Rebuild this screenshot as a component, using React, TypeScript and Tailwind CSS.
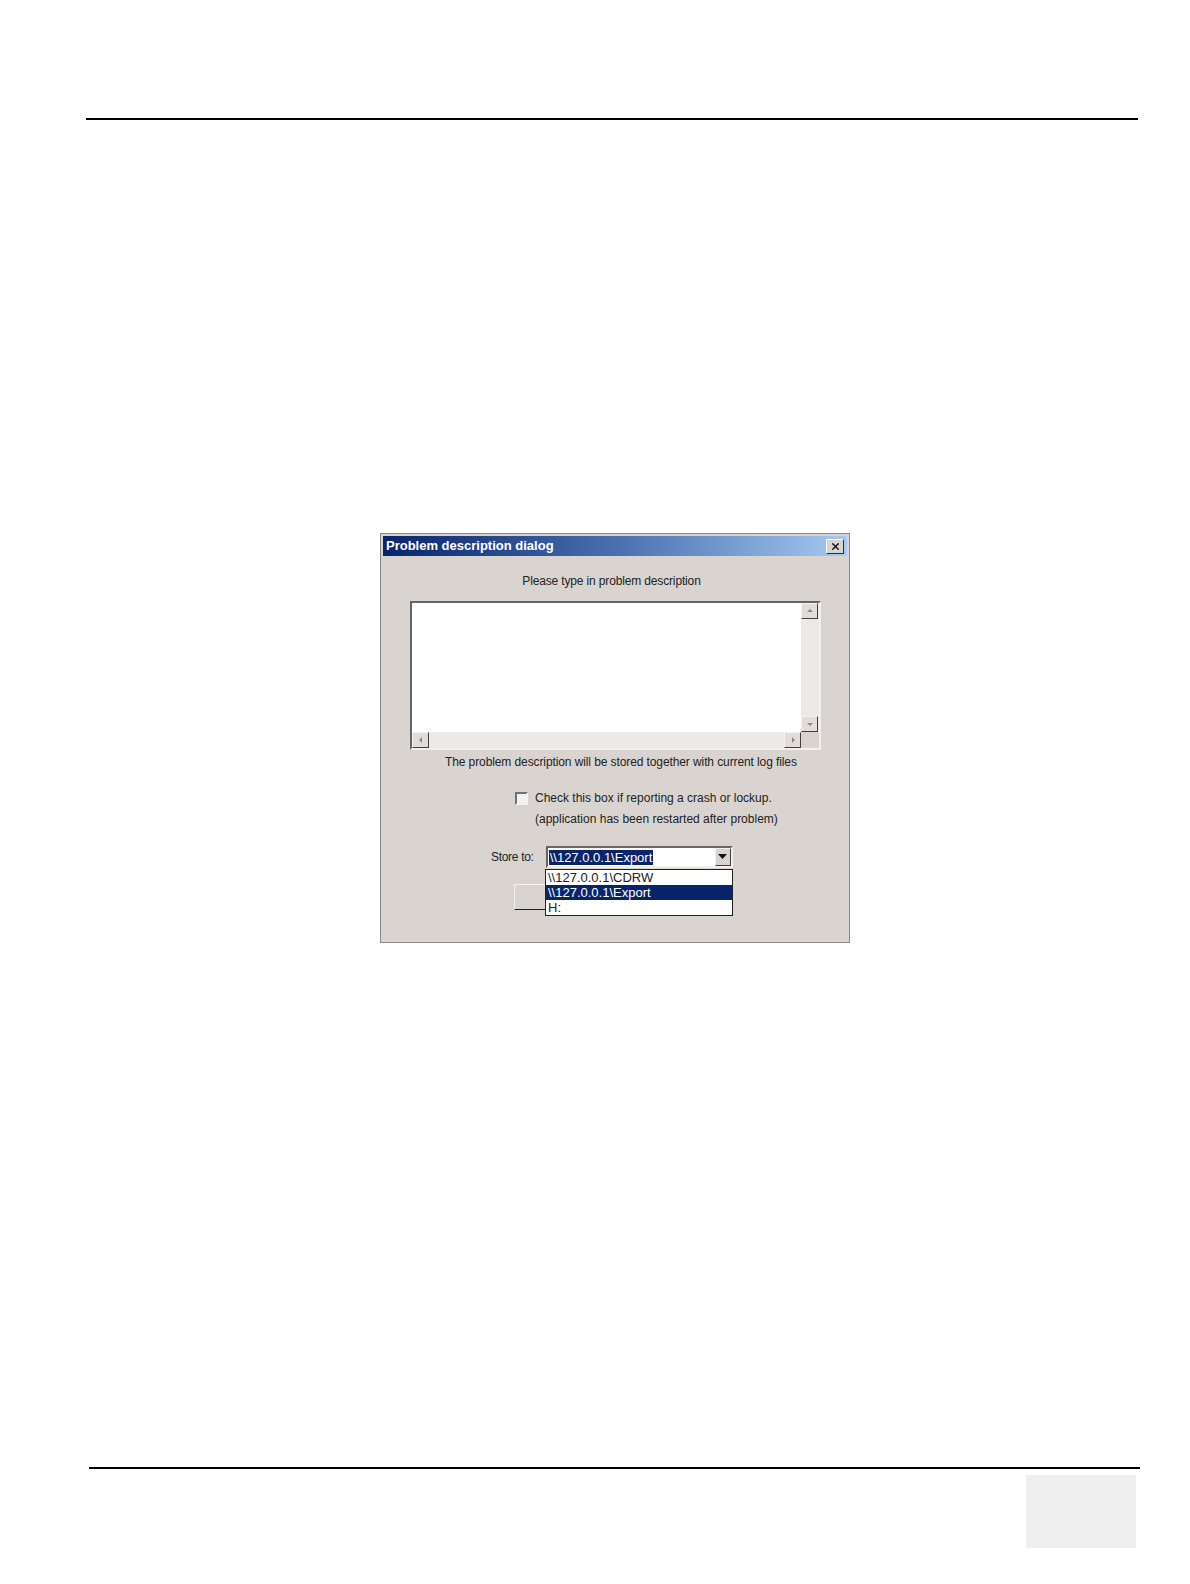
import { X } from "lucide-react";

const ui = { fontFamily: '"Liberation Sans", Arial, sans-serif' };

function ScrollBtn({ dir }: { dir: "up" | "down" | "left" | "right" }) {
  const pts: Record<string, string> = {
    up: "2,6 5,3 8,6",
    down: "2,4 5,7 8,4",
    left: "6,2 3,5 6,8",
    right: "4,2 7,5 4,8",
  };
  return (
    <div className="flex h-[16px] w-[17px] items-center justify-center border border-t-[#f4f2f0] border-l-[#f4f2f0] border-r-[#404040] border-b-[#404040] bg-[#e2ddda]">
      <svg width="10" height="10" viewBox="0 0 10 10">
        <polygon points={pts[dir]} fill="#8a8886" />
      </svg>
    </div>
  );
}

export default function App() {
  return (
    <main className="relative h-[1584px] w-[1190px] bg-white text-black" style={ui}>
      <div className="pt-[118px]">
        <div className="ml-[86px] h-[2px] w-[1052px] bg-black" />
      </div>

      {/* dialog */}
      <section className="ml-[380px] mt-[413px] flex h-[410px] w-[470px] flex-col border border-[#8c8a88] bg-[#dad4d1] p-[2px]">
        <div className="flex h-[20px] items-center justify-between bg-gradient-to-r from-[#0a246a] via-[#4a6fb0] to-[#a6caf0] pl-[3px] pr-[3px]">
          <span className="text-[13px] font-bold text-white">Problem description dialog</span>
          <div className="flex h-[15px] w-[18px] items-center justify-center border border-t-white border-l-white border-r-[#303030] border-b-[#303030] bg-[#d8d4d0]">
            <X size={11} strokeWidth={3} color="#111" />
          </div>
        </div>

        <div className="relative flex flex-1 flex-col">
          <p className="mt-[16px] pr-[7px] text-center text-[12px] tracking-[-0.15px] text-[#222]">Please type in problem description</p>

          <div className="ml-[27px] mt-[11px] flex h-[149px] w-[411px] flex-col border-2 border-t-[#666] border-l-[#666] border-r-[#f2efed] border-b-[#f2efed]">
            <div className="flex flex-1">
              <div className="flex-1 bg-white" />
              <div className="flex w-[18px] flex-col justify-between bg-[#ece9e6]">
                <ScrollBtn dir="up" />
                <ScrollBtn dir="down" />
              </div>
            </div>
            <div className="flex h-[16px]">
              <div className="flex flex-1 justify-between bg-[#ece9e6]">
                <ScrollBtn dir="left" />
                <ScrollBtn dir="right" />
              </div>
              <div className="w-[18px] bg-[#dad4d1]" />
            </div>
          </div>

          <p className="ml-[62px] mt-[3px] text-[12px] tracking-[-0.1px] text-[#222]">
            The problem description will be stored together with current log files
          </p>

          <div className="ml-[132px] mt-[20px] flex items-start gap-[7px]">
            <div className="mt-[1px] h-[13px] w-[13px] border-2 border-t-[#707070] border-l-[#707070] border-r-[#f4f2f0] border-b-[#f4f2f0] bg-[#f4f2f0]" />
            <div className="text-[12px] leading-[21px] text-[#222]">
              <p className="-mt-[3px]">Check this box if reporting a crash or lockup.</p>
              <p>(application has been restarted after problem)</p>
            </div>
          </div>

          <div className="ml-[108px] mt-[16px] flex items-center gap-[12px]">
            <span className="text-[12px] tracking-[-0.3px] text-[#222]">Store to:</span>
            <div className="flex h-[22px] w-[187px] items-center border-2 border-t-[#666] border-l-[#666] border-r-[#f2efed] border-b-[#f2efed] bg-white pl-[1px]">
              <span className="bg-[#0a246a] px-[1px] text-[13px] leading-[15px] text-white">\\127.0.0.1\Export</span>
              <div className="ml-auto flex h-[18px] w-[16px] items-center justify-center border border-t-[#f4f2f0] border-l-[#f4f2f0] border-r-[#404040] border-b-[#404040] bg-[#dad4d1]">
                <svg width="9" height="6" viewBox="0 0 9 6">
                  <polygon points="0,0 9,0 4.5,5" fill="#111" />
                </svg>
              </div>
            </div>
          </div>

          <div className="relative ml-[131px] mt-[16px] h-[26px] w-[40px] border border-t-[#f4f2f0] border-l-[#f4f2f0] border-r-[#202020] border-b-[#202020]">
            <ul className="absolute -top-[16px] left-[30px] w-[188px] border border-[#222] bg-white text-[13px] leading-[15px]">
              <li className="px-[2px] text-[#222]">\\127.0.0.1\CDRW</li>
              <li className="bg-[#0a246a] px-[2px] text-white">\\127.0.0.1\Export</li>
              <li className="px-[2px] text-[#222]">H:</li>
            </ul>
          </div>
        </div>
      </section>

      <div className="mt-[524px] ml-[89px] h-[2px] w-[1051px] bg-black" />
      <div className="ml-[1026px] mt-[6px] h-[73px] w-[110px] bg-[#efefef]" />
    </main>
  );
}
